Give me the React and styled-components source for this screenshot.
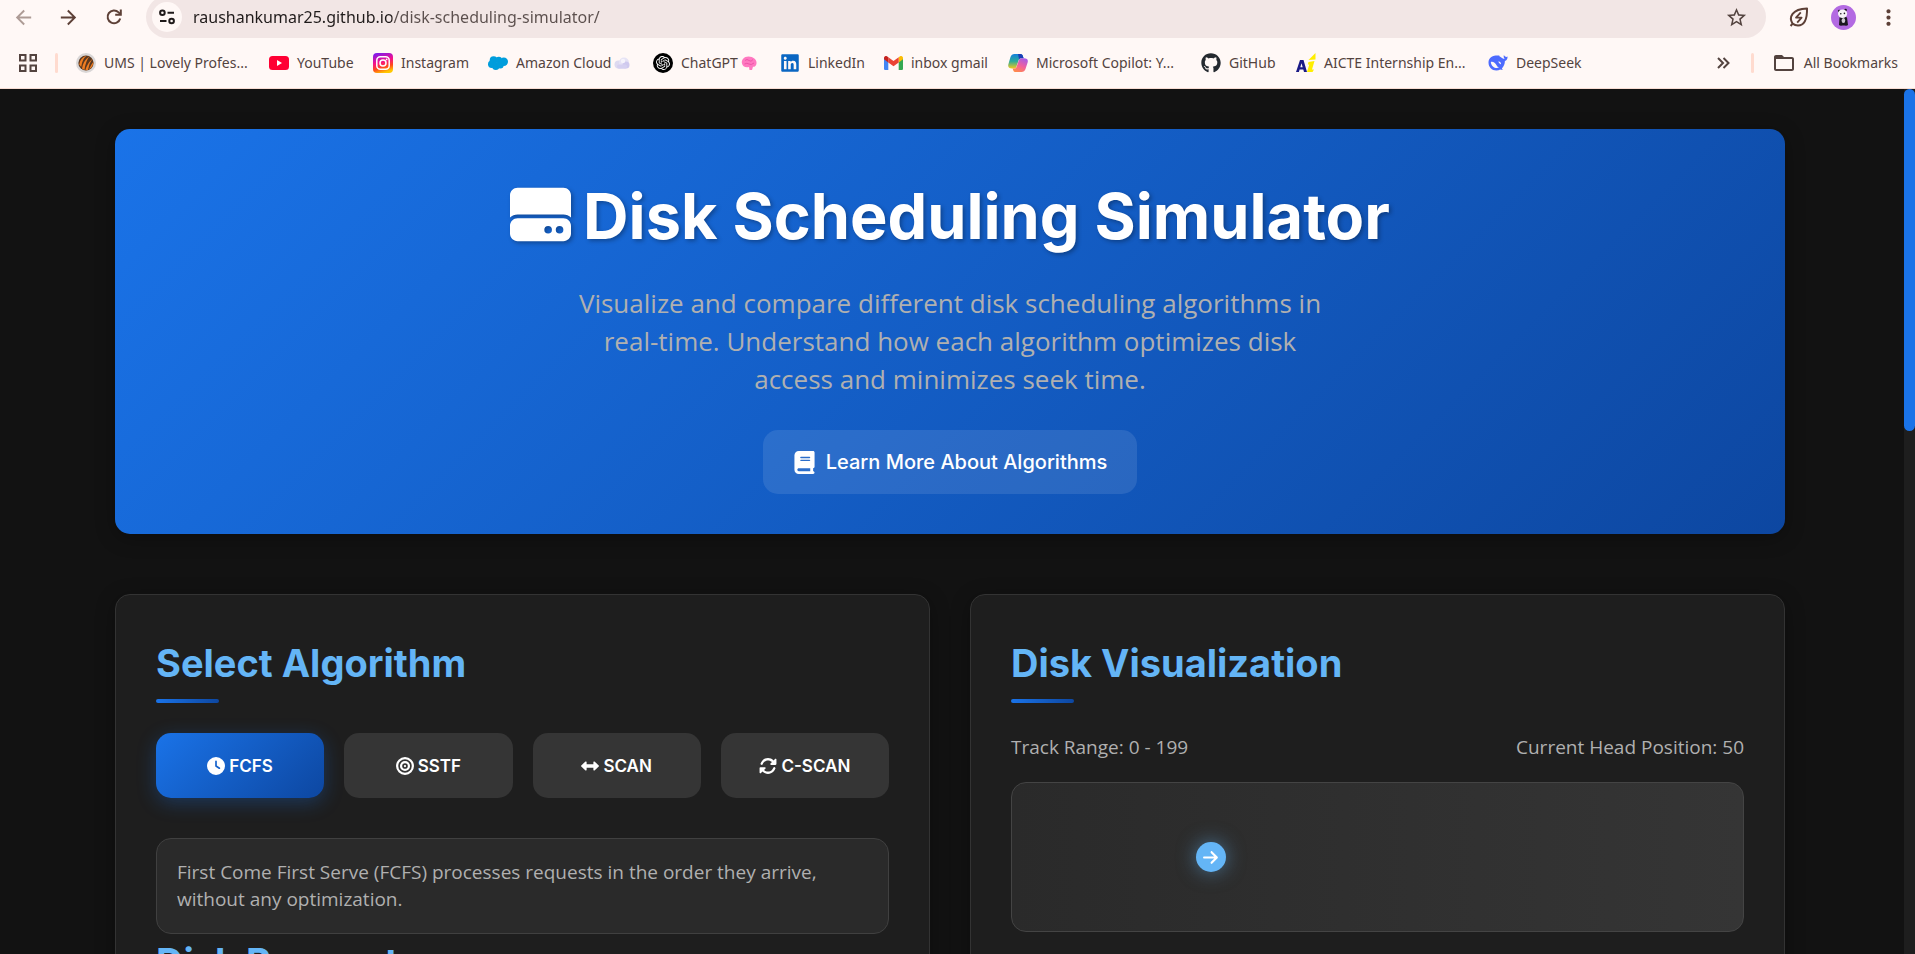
import React, { useState } from 'react';
import styled, { createGlobalStyle, css } from 'styled-components';
import { MdArrowBack, MdArrowForward, MdStarBorder, MdMoreVert, MdFolderOpen } from 'react-icons/md';
import {
  FaHardDrive, FaBook, FaClock, FaBullseye, FaLeftRight, FaRotate,
  FaArrowRight, FaGithub, FaLinkedin,
} from 'react-icons/fa6';
import { SiOpenai } from 'react-icons/si';

const headingFont = '"Inter", "Liberation Sans", sans-serif';
const bodyFont = '"Open Sans", "Liberation Sans", sans-serif';
const chromeFont = '"Noto Sans", "Liberation Sans", sans-serif';

const GlobalStyle = createGlobalStyle`
  *, *::before, *::after { box-sizing: border-box; }
  body { margin: 0; background: #121212; overflow: hidden; }
  h1, h2, p { margin: 0; }
  button { font: inherit; color: inherit; border: 0; background: none; padding: 0; cursor: pointer; }
  a { color: inherit; text-decoration: none; }
  svg { display: block; flex: none; }
`;

const Window = styled.div`
  display: flex;
  flex-direction: column;
  height: 100vh;
  overflow: hidden;
`;

/* Browser chrome */

const BrowserBar = styled.header`
  flex: none;
  background: #fff8f6;
  color: #53433f;
  border-bottom: 1px solid #f7dcd2;
  font-family: ${chromeFont};
`;

const Toolbar = styled.div`
  display: flex;
  align-items: center;
  height: 42px;
  margin-top: -4px;
  padding: 0 4px 0 1px;
`;

const ToolButton = styled.button`
  display: flex;
  align-items: center;
  justify-content: center;
  width: 45px;
  height: 34px;
  color: #5d4037;
  opacity: ${(p) => (p.$faded ? 0.5 : 1)};
`;

const Omnibox = styled.label`
  display: flex;
  align-items: center;
  flex: 1;
  height: 42px;
  margin: 0 10px;
  padding: 0 18px 0 6px;
  border-radius: 21px;
  background: #f2e6e5;
`;

const SiteChip = styled.span`
  display: flex;
  align-items: center;
  justify-content: center;
  width: 30px;
  height: 30px;
  margin-right: 11px;
  border-radius: 50%;
  background: #fff8f6;
`;

const AddressInput = styled.input`
  flex: 1;
  min-width: 0;
  padding: 0;
  border: 0;
  outline: 0;
  font: 400 16px/24px ${chromeFont};
  color: transparent;
  background: linear-gradient(90deg, #1f1a1a 199px, #5b4f4d 199px);
  background-clip: text;
  -webkit-background-clip: text;
`;

const BookmarksBar = styled.nav`
  display: flex;
  align-items: center;
  height: 50px;
  padding: 0 17px 0 19px;
  font-size: 14px;
  line-height: 20px;
  color: #53433f;
`;

const Divider = styled.span`
  width: 3px;
  height: 20px;
  margin: 0 18px;
  border-radius: 2px;
  background: #ffdbcf;
`;

const Bookmark = styled.a`
  display: flex;
  align-items: center;
  gap: 8px;
  width: ${(p) => p.$width}px;
  white-space: nowrap;
`;

const BookmarkLabel = styled.span`
  display: flex;
  align-items: center;
  gap: 3px;
`;

const AllBookmarks = styled.button`
  display: flex;
  align-items: center;
  gap: 8px;
`;

const Overflow = styled.button`
  display: flex;
  margin-left: auto;
  padding-right: 3px;
`;

/* Page */

const Viewport = styled.div`
  display: flex;
  flex: 1;
  min-height: 0;
  background: #121212;
`;

const Page = styled.main`
  flex: 1;
  min-width: 0;
  padding: 40px 4px 0 0;
  overflow: hidden;
`;

const Container = styled.div`
  display: flex;
  flex-direction: column;
  gap: 60px;
  max-width: 1750px;
  margin: 0 auto;
  padding: 0 40px;
`;

const ScrollTrack = styled.div`
  flex: none;
  width: 11px;
  background: #1e1e1e;
`;

const ScrollThumb = styled.div`
  height: 39.5%;
  border-radius: 6px;
  background: #1a73e8;
`;

const Hero = styled.section`
  display: flex;
  flex-direction: column;
  align-items: center;
  padding: 40px;
  border-radius: 15px;
  background: linear-gradient(135deg, #1a73e8 0%, #0d47a1 100%);
  box-shadow: 0 4px 20px rgba(0, 0, 0, 0.3);
  text-align: center;
`;

const Title = styled.h1`
  display: flex;
  align-items: center;
  gap: 12px;
  margin-bottom: 21px;
  color: #fff;
  font: 700 63px/94px ${headingFont};
  text-shadow: 2px 2px 4px rgba(0, 0, 0, 0.3);

  svg {
    width: 61px;
    height: 61px;
    margin-bottom: 3px;
    filter: drop-shadow(2px 2px 2px rgba(0, 0, 0, 0.3));
  }
`;

const Subtitle = styled.p`
  max-width: 750px;
  margin-bottom: 32px;
  color: #b0b0b0;
  font: 400 26px/38px ${bodyFont};
`;

const LearnMore = styled.a`
  display: flex;
  align-items: center;
  gap: 10px;
  height: 64px;
  padding: 0 30px;
  border-radius: 15px;
  background: rgba(255, 255, 255, 0.1);
  color: #fff;
  font: 500 20px/32px ${headingFont};
`;

const Panels = styled.div`
  display: grid;
  grid-template-columns: 1fr 1fr;
  gap: 40px;
`;

const Panel = styled.section`
  min-height: 500px;
  padding: 40px;
  border: 1px solid #333;
  border-radius: 15px;
  background: #1e1e1e;
  box-shadow: 0 4px 20px rgba(0, 0, 0, 0.3);
`;

const PanelTitle = styled.h2`
  margin-bottom: 30px;
  color: #64b5f6;
  font: 700 38px/56px ${headingFont};

  &::after {
    content: '';
    display: block;
    width: 63px;
    height: 4px;
    margin-top: 8px;
    border-radius: 2px;
    background: linear-gradient(90deg, #1a73e8, #0d47a1);
  }
`;

const AlgorithmGrid = styled.div`
  display: grid;
  grid-template-columns: repeat(4, 1fr);
  gap: 20px;
  margin-bottom: 40px;
`;

const AlgorithmButton = styled.button`
  display: flex;
  align-items: center;
  justify-content: center;
  gap: 4px;
  height: 65px;
  border-radius: 15px;
  background: #353535;
  color: #fff;
  font: 600 17px/26px ${headingFont};

  ${(p) => p.$active && css`
    background: linear-gradient(135deg, #1a73e8 0%, #0d47a1 100%);
    box-shadow: 0 5px 19px rgba(26, 115, 232, 0.3);
  `}
`;

const Description = styled.p`
  padding: 20px;
  border: 1px solid #404040;
  border-radius: 15px;
  background: #2a2a2a;
  color: #b0b0b0;
  font: 400 19px/27px ${bodyFont};
`;

const TrackInfo = styled.div`
  display: flex;
  justify-content: space-between;
  margin-bottom: 20px;
  color: #b0b0b0;
  font: 400 19px/29px ${bodyFont};
`;

const DiskTrack = styled.div`
  position: relative;
  height: 150px;
  border: 1px solid #444;
  border-radius: 15px;
  background: linear-gradient(90deg, #2a2a2a, #353535);
`;

const DiskHead = styled.div`
  position: absolute;
  top: 50%;
  display: flex;
  align-items: center;
  justify-content: center;
  width: 30px;
  height: 30px;
  margin-top: -15px;
  border-radius: 50%;
  background: #64b5f6;
  color: #fff;
  box-shadow: 0 0 19px rgba(100, 181, 246, 0.5);
`;

/* Icons drawn for the browser chrome */

const ReloadIcon = () => (
  <svg width="18" height="18" viewBox="0 0 18 18" fill="none" stroke="currentColor" strokeWidth="2">
    <path d="M15.2 10.5A6.4 6.4 0 1 1 13.6 4.4L15.6 6.4" />
    <path d="M15.8 1.4v5.4h-5.6" />
  </svg>
);

const TuneIcon = () => (
  <svg width="16" height="16" viewBox="0 0 16 16" fill="none" stroke="#1f1a1a" strokeWidth="2">
    <circle cx="3.4" cy="3.8" r="2.3" />
    <path d="M8.5 3.8H15M1 12h6.5" />
    <circle cx="12.6" cy="12" r="2.3" />
  </svg>
);

const LeafIcon = () => (
  <svg width="22" height="22" viewBox="0 0 22 22" fill="none" stroke="currentColor" strokeWidth="2" strokeLinejoin="round">
    <path d="M4.6 17.6C.6 11.4 3.8 2.8 19 2.4c.4 12-3.4 17-9 17-2 0-3.8-.6-5.4-1.8zM4.6 17.6L2.6 20" />
    <path d="M12.8 6.4L8 11.6h5.6l-4.4 5" strokeWidth="1.8" />
  </svg>
);

const PandaAvatar = () => (
  <svg width="25" height="25" viewBox="0 0 25 25">
    <circle cx="12.5" cy="12.5" r="12.5" fill="#b36ae2" />
    <path d="M8.5 12.5q4-2 7.500 0l1 7.500q-1 1-3.500.5h-2q-2.500.5-3.500-.5z" fill="#1c1820" />
    <ellipse cx="12.4" cy="15.5" rx="1.800" ry="2.500" fill="#cfc8d4" />
    <circle cx="8.200" cy="6" r="1.300" fill="#1c1820" />
    <circle cx="14.600" cy="5" r="1.300" fill="#1c1820" />
    <ellipse cx="11.6" cy="8.800" rx="4.600" ry="4.200" fill="#f4f1f5" />
    <circle cx="9.800" cy="8.800" r="0.800" fill="#1c1820" />
    <circle cx="13.400" cy="8.400" r="0.800" fill="#1c1820" />
  </svg>
);

const AppsIcon = () => (
  <svg width="18" height="18" viewBox="0 0 18 18" fill="none" stroke="currentColor" strokeWidth="2">
    <path d="M1 1h5.500v5.500H1zM11.500 1H17v5.500h-5.500zM1 11.500h5.500V17H1zM11.500 11.500H17V17h-5.500z" />
  </svg>
);

const UniversityIcon = () => (
  <svg width="20" height="20" viewBox="0 0 20 20">
    <circle cx="10" cy="10" r="10" fill="#d9d6d6" />
    <circle cx="10" cy="10" r="7.600" fill="#5a3820" />
    <path d="M3.200 11.500Q4 5 10.500 2.800 6 6.500 5.200 14zM6 15.500Q7 8 13.400 3.200 9.500 8.500 8.400 17zM9.400 17.300Q10.500 11.500 16.400 5.800 13 10.500 12 17zM13 16.500Q14.500 12.500 17.500 8.600 17.400 14 13 16.500z" fill="#ef7d22" />
  </svg>
);

const YouTubeIcon = () => (
  <svg width="20" height="14" viewBox="0 0 20 14">
    <rect width="20" height="14" rx="3.500" fill="#ff0033" />
    <path d="M8 4l5 3-5 3z" fill="#fff" />
  </svg>
);

const InstagramIcon = () => (
  <svg width="20" height="20" viewBox="0 0 20 20" fill="none">
    <defs>
      <linearGradient id="ig" x1="0.200" y1="0" x2="0.500" y2="1">
        <stop offset="0" stopColor="#7a1cf0" />
        <stop offset="0.450" stopColor="#f5108c" />
        <stop offset="0.750" stopColor="#ff4a1c" />
        <stop offset="1" stopColor="#ffc800" />
      </linearGradient>
    </defs>
    <rect width="20" height="20" rx="4" fill="url(#ig)" />
    <rect x="3.800" y="3.800" width="12.400" height="12.400" rx="3.500" stroke="#fff" strokeWidth="1.500" />
    <circle cx="10" cy="10" r="3" stroke="#fff" strokeWidth="1.500" />
    <circle cx="13.600" cy="6.400" r="0.900" fill="#fff" />
  </svg>
);

const SalesforceIcon = () => (
  <svg width="20" height="14" viewBox="0 0 20 14" fill="#009ddc">
    <circle cx="5.600" cy="4.200" r="3.900" />
    <circle cx="10.800" cy="4" r="3.200" />
    <circle cx="15.800" cy="5.800" r="4.200" />
    <circle cx="3.700" cy="8.200" r="3.700" />
    <circle cx="7.800" cy="10.200" r="3.700" />
    <circle cx="12.200" cy="9" r="3.500" />
  </svg>
);

const CloudEmoji = () => (
  <svg width="16" height="16" viewBox="0 0 16 16">
    <circle cx="4.500" cy="9.500" r="4" fill="#dedaf0" />
    <circle cx="10" cy="7.500" r="5" fill="#e6e3f5" />
    <circle cx="12" cy="10" r="3.500" fill="#cfc9ee" />
    <rect x="3" y="9.500" width="10" height="4.200" rx="2" fill="#d5d0f0" />
    <circle cx="9" cy="6" r="2.200" fill="#f5f3fb" />
  </svg>
);

const ChatGptIcon = styled.span`
  display: flex;
  align-items: center;
  justify-content: center;
  width: 20px;
  height: 20px;
  border-radius: 50%;
  background: #000;
  color: #fff;
`;

const BrainEmoji = () => (
  <svg width="16" height="16" viewBox="0 0 16 16">
    <path d="M1 8.500C0 5 3 1.500 7.500 1.500S16 4.500 15.500 8.500c-.3 2.500-2 3.500-3.500 3.300L11 15H8.500L8 12C4 13 1.500 11 1 8.500z" fill="#ff78c0" />
    <path d="M4 5.500q2-2 4 0t4-1M3.500 9q2.500-1.500 4.500 0t5-1" fill="none" stroke="#ee55aa" strokeWidth="1" />
  </svg>
);

const GmailIcon = () => (
  <svg width="19" height="14" viewBox="0 0 19 14">
    <path d="M0 2v10.700C0 13.500.6 14 1.300 14h3V5.500z" fill="#4285f4" />
    <path d="M19 2v10.700c0 .8-.6 1.300-1.300 1.300h-3V5.500z" fill="#34a853" />
    <path d="M14.700 1.200v5.200L19 3.200V2c0-1.800-2-2.600-3.300-1.600z" fill="#fbbc04" />
    <path d="M4.300 6.400V1.200l5.200 3.900 5.200-3.900v5.200l-5.200 3.900z" fill="#ea4335" />
    <path d="M0 2v1.200l4.300 3.200V1.200L3.300.4C2-.6 0 .2 0 2z" fill="#c5221f" />
  </svg>
);

const CopilotIcon = () => (
  <svg width="20" height="20" viewBox="0 0 20 20">
    <defs>
      <linearGradient id="cpa" x1="0.300" y1="0" x2="0.300" y2="1">
        <stop offset="0" stopColor="#1580dd" />
        <stop offset="0.500" stopColor="#2bab9a" />
        <stop offset="1" stopColor="#f3c81c" />
      </linearGradient>
      <linearGradient id="cpb" x1="0.800" y1="0" x2="0.300" y2="1">
        <stop offset="0" stopColor="#a45bea" />
        <stop offset="0.550" stopColor="#f2609b" />
        <stop offset="1" stopColor="#ff8a4c" />
      </linearGradient>
    </defs>
    <path d="M6.500 1h6.300q1.400 0 1.900 1.500l.9 2.700h-2.800q-1.500 0-2 1.500L8.300 14q-.6 1.500-2 1.500H4Q-.5 15.500.300 11.500L2.500 4Q3.500 1 6.500 1z" fill="url(#cpa)" />
    <path d="M10 1h2.800q1.400 0 1.900 1.500l.9 2.700h-2.800q-1.200 0-1.700 1.200z" fill="#1b3fb5" />
    <path d="M13.500 19H7.200q-1.400 0-1.900-1.500l-.7-2h1.900q1.500 0 2-1.500l2.500-7.300q.6-1.500 2-1.500h3q4.500 0 3.700 4L17.500 16q-1 3-4 3z" fill="url(#cpb)" />
  </svg>
);

const AicteIcon = () => (
  <svg width="20" height="20" viewBox="0 0 20 20">
    <path d="M0 19L4 7h3.500L11 19H8l-.7-2.500H3.600L2.900 19zM4.300 14.200h2.400L5.500 10.300z" fill="#1b1a86" />
    <path d="M12.500 7L19.500 0 19.500 6.500z" fill="#ffee00" />
    <path d="M12.500 9l6-1-2.500 8.500h2L16.500 19H11l2.300-7.500h-1.500z" fill="#ffee00" />
  </svg>
);

const DeepSeekIcon = () => (
  <svg width="20" height="16" viewBox="0 0 20 16">
    <path d="M19.600 1.500c-1 .7-1.600.3-2.500.1-.6-.6-1-1-1.200-1.500-.6 1.700 0 3 .8 4-1.700 0-3-1.400-4.500-2.300-.6-.4-1-.6-.9-1.300C6.500 0 .5 1.300.5 7.500c0 4.600 3.400 8 7.800 8 1.600 0 2.900-.4 4-1.100.9.400 2 .4 2.600.1-.7-.3-.9-.7-1-1.100 2-1.900 2.900-4.400 3-7.400 1.700-.5 2.700-2 2.700-4.500z" fill="#4d6bfe" />
    <path d="M2.800 7c2.600-.6 4.400 1 5.600 3 .8 1.400 1.600 2.200 2.700 2.600-3.400 1.400-7.600-.4-8.300-5.600z" fill="#fff8f6" />
    <path d="M10.300 6.500c1.400-.4 2.800.7 2.700 2.800-1.300-.4-2.200-1.300-2.700-2.800z" fill="#fff8f6" />
  </svg>
);

const ChevronsIcon = () => (
  <svg width="13" height="12" viewBox="0 0 13 12" fill="none" stroke="currentColor" strokeWidth="2">
    <path d="M1 1l5 5-5 5M6.500 1l5 5-5 5" />
  </svg>
);

const bookmarks = [
  { label: 'UMS | Lovely Profes...', icon: <UniversityIcon />, width: 193 },
  { label: 'YouTube', icon: <YouTubeIcon />, width: 104 },
  { label: 'Instagram', icon: <InstagramIcon />, width: 115 },
  { label: 'Amazon Cloud', icon: <SalesforceIcon />, after: <CloudEmoji />, width: 165 },
  { label: 'ChatGPT', icon: <ChatGptIcon><SiOpenai size={14} /></ChatGptIcon>, after: <BrainEmoji />, width: 127 },
  { label: 'LinkedIn', icon: <FaLinkedin size={20} color="#0a66c2" />, width: 104 },
  { label: 'inbox gmail', icon: <GmailIcon />, width: 124 },
  { label: 'Microsoft Copilot: Y...', icon: <CopilotIcon />, width: 193 },
  { label: 'GitHub', icon: <FaGithub size={20} color="#24292f" />, width: 95 },
  { label: 'AICTE Internship En...', icon: <AicteIcon />, width: 192 },
  { label: 'DeepSeek', icon: <DeepSeekIcon />, width: 96 },
];

const algorithms = [
  { name: 'FCFS', Icon: FaClock },
  { name: 'SSTF', Icon: FaBullseye },
  { name: 'SCAN', Icon: FaLeftRight },
  { name: 'C-SCAN', Icon: FaRotate },
];

const trackCount = 199;

export default function App() {
  const [algorithm, setAlgorithm] = useState('FCFS');
  const [address, setAddress] = useState('raushankumar25.github.io/disk-scheduling-simulator/');
  const head = 50;

  return (
    <Window>
      <GlobalStyle />
      <BrowserBar>
        <Toolbar>
          <ToolButton $faded aria-label="Back"><MdArrowBack size={23} /></ToolButton>
          <ToolButton aria-label="Forward"><MdArrowForward size={23} /></ToolButton>
          <ToolButton aria-label="Reload"><ReloadIcon /></ToolButton>
          <Omnibox>
            <SiteChip><TuneIcon /></SiteChip>
            <AddressInput
              aria-label="Address"
              value={address}
              onChange={(e) => setAddress(e.target.value)}
              spellCheck={false}
            />
            <MdStarBorder size={23} />
          </Omnibox>
          <ToolButton aria-label="Energy saver"><LeafIcon /></ToolButton>
          <ToolButton aria-label="Profile"><PandaAvatar /></ToolButton>
          <ToolButton aria-label="Menu"><MdMoreVert size={25} /></ToolButton>
        </Toolbar>
        <BookmarksBar>
          <AppsIcon />
          <Divider />
          {bookmarks.map((b) => (
            <Bookmark key={b.label} href="#" $width={b.width}>
              {b.icon}
              <BookmarkLabel>{b.label}{b.after}</BookmarkLabel>
            </Bookmark>
          ))}
          <Overflow aria-label="More bookmarks"><ChevronsIcon /></Overflow>
          <Divider />
          <AllBookmarks><MdFolderOpen size={24} />All Bookmarks</AllBookmarks>
        </BookmarksBar>
      </BrowserBar>

      <Viewport>
        <Page>
          <Container>
            <Hero>
              <Title><FaHardDrive />Disk Scheduling Simulator</Title>
              <Subtitle>
                Visualize and compare different disk scheduling algorithms in real-time.
                Understand how each algorithm optimizes disk access and minimizes seek time.
              </Subtitle>
              <LearnMore href="#"><FaBook size={23} />Learn More About Algorithms</LearnMore>
            </Hero>

            <Panels>
              <Panel>
                <PanelTitle>Select Algorithm</PanelTitle>
                <AlgorithmGrid>
                  {algorithms.map(({ name, Icon }) => (
                    <AlgorithmButton
                      key={name}
                      $active={algorithm === name}
                      onClick={() => setAlgorithm(name)}
                    >
                      <Icon size={18} />{name}
                    </AlgorithmButton>
                  ))}
                </AlgorithmGrid>
                <Description>
                  First Come First Serve (FCFS) processes requests in the order they arrive,
                  without any optimization.
                </Description>
                <PanelTitle>Disk Requests</PanelTitle>
              </Panel>

              <Panel>
                <PanelTitle>Disk Visualization</PanelTitle>
                <TrackInfo>
                  <span>Track Range: 0 - {trackCount}</span>
                  <span>Current Head Position: {head}</span>
                </TrackInfo>
                <DiskTrack>
                  <DiskHead style={{ left: `${(head / trackCount) * 100}%` }}>
                    <FaArrowRight size={17} />
                  </DiskHead>
                </DiskTrack>
              </Panel>
            </Panels>
          </Container>
        </Page>
        <ScrollTrack><ScrollThumb /></ScrollTrack>
      </Viewport>
    </Window>
  );
}
